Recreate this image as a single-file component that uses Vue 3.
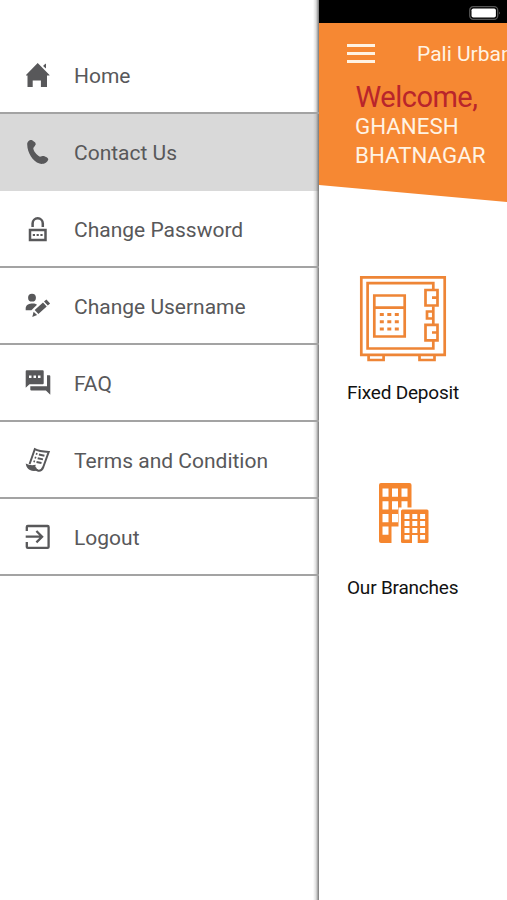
<script setup>
const items = [
  { id: 'home', label: 'Home' },
  { id: 'contact', label: 'Contact Us', active: true },
  { id: 'password', label: 'Change Password' },
  { id: 'username', label: 'Change Username' },
  { id: 'faq', label: 'FAQ' },
  { id: 'terms', label: 'Terms and Condition' },
  { id: 'logout', label: 'Logout' },
]
</script>

<template>
  <div class="screen">
    <nav class="drawer">
      <a v-for="item in items" :key="item.id" class="item" :class="{ active: item.active }">
        <svg class="icon" viewBox="0 0 32 32">
          <g v-if="item.id === 'home'">
            <path d="M15.7 4 4 16v.6h1.500V28h5.200v-6.400h8.200V28H25V16.600h2.500V16Z" />
            <path d="M21.500 6.300 24 4.600v4.800l-2.500-2Z" />
          </g>
          <path v-else-if="item.id === 'contact'" d="M5.2 8.5C5 5.5 7.800 3.500 10.200 4.200L13.200 6.600Q14.600 8.200 12.800 10L11.300 12C11.400 15 14.500 19 18 20.800L20.500 20C22 19.500 26 21.500 26.300 23.200C25.500 27 21 28.600 17.500 27.600C10.500 25 5.500 17 5.200 8.500Z" />
          <g v-else-if="item.id === 'password'">
            <path class="line" d="M10.600 14V10.400a5.100 5.100 0 0 1 10.200 0V14" stroke-width="2.500" />
            <path class="line" d="M8 17h15.500v10H8Z" stroke-width="2.500" />
            <path class="line" d="M10.800 22h10" stroke-width="2.200" stroke-dasharray="2.200 1.600" />
          </g>
          <g v-else-if="item.id === 'username'">
            <circle cx="10" cy="7.700" r="3.900" />
            <path d="M3.700 20.300v-2.600c.5-3 3.500-4.200 7-4.200 1.800 0 3.300.4 4.300 1.200l-5.600 5.600Z" />
            <path d="m12.700 20 8.300-7.600 3.700 4-8.300 7.600ZM22 11.500l2.400-2.100 3.700 4-2.300 2.200ZM11.600 21.700l3.500 3.400-4.800 2Z" />
          </g>
          <g v-else-if="item.id === 'faq'">
            <path fill-rule="evenodd" d="M4.700 3.300h16q1 0 1 1v12q0 1-1 1H7.500l-3.800 3.500V4.300q0-1 1-1ZM7 8.400v2.500h2.500V8.400ZM11.500 8.400v2.500H14V8.400ZM16 8.400v2.500h2.500V8.400Z" />
            <path d="M25 8.300h2.300q1 0 1 1v18.400l-4.400-4.200H9.300q-1 0-1-1v-3.200H25Z" />
          </g>
          <g v-else-if="item.id === 'terms'">
            <path class="line" d="M7.600 20 12.800 5.200q4 2.300 13.900 2.700L21.300 23q-1.800 4.300-5 3.700Q13 26 13.100 23.300" stroke-width="2" />
            <path d="M3.700 19.600q4.700 2.400 10 1.200-1.300 3.800 2.800 5.100-4.500 2-8.600.1-3.500-1.600-4.200-6.400Z" />
            <path class="line" d="m13.900 9.600 1.500.5m1.500.4 5.500 1.200M12.700 13.400l1.500.5m1.500.4 5.300 1.100M11.500 17.100l1.500.5m1.500.4 5 1" stroke-width="1.900" />
          </g>
          <g v-else>
            <path class="line" d="M4.800 10V6q0-1 1-1h19.800q1 0 1 1v19.900q0 1-1 1H5.800q-1 0-1-1V21" stroke-width="2.300" />
            <path class="line" d="M3.700 15.700h15.500M14.400 10l5.700 5.700-5.700 5.700" stroke-width="2.300" />
          </g>
        </svg>
        <span class="label">{{ item.label }}</span>
      </a>
    </nav>

    <main class="page">
      <div class="status">
        <svg class="battery" viewBox="0 0 34 16">
          <rect x="1.700" y="1.700" width="28" height="12.600" rx="3.500" fill="#000" stroke="#555" stroke-width="1.300" />
          <rect x="3.500" y="3.500" width="24.400" height="9" rx="1.800" fill="#fff" />
          <path d="M31 6.500q1.700 1.500 0 3Z" fill="#777" />
        </svg>
      </div>
      <header class="hero">
        <div class="bar">
          <span class="burger"><i></i><i></i><i></i></span>
          <span class="title">Pali Urban</span>
        </div>
        <div class="welcome">Welcome,</div>
        <div class="name">GHANESH<br />BHATNAGAR</div>
      </header>
      <section class="tile">
        <svg class="safe" viewBox="0 0 88 88" fill="none" stroke="#ee8536" stroke-width="2.700">
          <path d="M2.300 2.300h83.400v77.500H2.300Z" />
          <path d="M74.300 15V8.200H8.600v65.300h65.700V66M74.300 31.300V51" />
          <path d="M15.300 20.500h30.400v41H15.300ZM15.300 32.700h30.400" />
          <path d="M20.800 39.500h19M20.800 46.700h19M20.800 54h19" stroke-width="3" stroke-dasharray="4 3.500" />
          <path d="M66.500 15h12v15.500h-12ZM66.500 49.800h12v15.500h-12ZM73 22.700h5.500M73 57.500h5.500M74 36.500h-6v7h6" />
          <path d="M9.600 80v5h15v-5M60.500 80v5h15v-5" />
        </svg>
        <span class="caption">Fixed Deposit</span>
      </section>
      <section class="tile branches">
        <svg class="towers" viewBox="0 0 50 61">
          <rect width="32.500" height="60" rx="2" fill="#f5862f" />
          <path d="M3.500 5.500h6v8.300h-6ZM13 5.500h6v8.300h-6ZM22.500 5.500h6v8.300h-6ZM3.500 18.300h6v8.300h-6ZM13 18.300h6v8.300h-6ZM22.500 18.300h6v8.300h-6ZM3.500 31h6v8.300h-6ZM13 31h6v8.300h-6ZM3.500 43.500h6v8.300h-6ZM12.500 43.500H33V61H12.500ZM19.500 24.500H33V61H19.500Z" fill="#fff" />
          <rect x="22" y="26.500" width="27.500" height="33.500" rx="1.500" fill="#f5862f" />
          <path d="M25.500 31h5v5h-5ZM33.300 31h5v5h-5ZM41.100 31h5v5h-5ZM25.500 38h5v5h-5ZM33.300 38h5v5h-5ZM41.100 38h5v5h-5ZM25.500 45h5v5h-5ZM33.300 45h5v5h-5ZM41.100 45h5v5h-5ZM25.500 52h5v4.500h-5ZM33 52h5.700v8.500H33ZM41.100 52h5v4.500h-5Z" fill="#fff" />
        </svg>
        <span class="caption">Our Branches</span>
      </section>
    </main>
  </div>
</template>

<style>
body {
  margin: 0;
  overflow: hidden;
}
</style>

<style scoped>
.screen {
  display: flex;
  width: 507px;
  height: 900px;
  overflow: hidden;
  background: #fff;
  font-family: Roboto, "Liberation Sans", sans-serif;
}
.drawer {
  box-sizing: border-box;
  flex: none;
  width: 319px;
  padding-top: 37px;
  background: linear-gradient(to right, transparent 313px, #ddd 316px, #777 319px);
}
.item {
  box-sizing: border-box;
  display: flex;
  align-items: center;
  height: 77px;
  padding: 1px 0 0 22px;
  border-bottom: 2px solid #a3a3a3;
  color: #58585a;
}
.item.active {
  border-bottom-color: transparent;
  background: linear-gradient(to right, #d9d9d9 313px, #c4c4c4 316px, #777 319px);
}
.icon {
  width: 32px;
  height: 32px;
  fill: #58585a;
}
.line {
  fill: none;
  stroke: #58585a;
}
.label {
  margin-left: 20px;
  font-size: 21px;
  line-height: 24px;
  padding-top: 1px;
  white-space: nowrap;
}
.page {
  flex: none;
  width: 188px;
  overflow: hidden;
  background: #fff;
}
.status {
  display: flex;
  height: 23px;
  padding: 5px 0 0 149px;
  box-sizing: border-box;
  background: #000;
}
.battery {
  width: 34px;
  height: 16px;
}
.hero {
  box-sizing: border-box;
  height: 179px;
  padding-top: 17px;
  background: #f68833;
  color: #fff3e4;
  clip-path: polygon(0 0, 100% 0, 100% 100%, 0 162px);
}
.bar {
  display: flex;
  align-items: center;
  height: 27px;
  padding-left: 28px;
}
.burger {
  display: flex;
  flex: none;
  flex-direction: column;
  gap: 5px;
  width: 28px;
}
.burger i {
  height: 3px;
  background: #fff3e4;
}
.title {
  margin-left: 42px;
  font-size: 21px;
  white-space: nowrap;
}
.welcome {
  padding: 13px 0 0 36.500px;
  color: #b9252b;
  font-size: 29px;
  line-height: 34px;
  letter-spacing: -0.500px;
}
.name {
  padding-left: 36px;
  margin-top: -2px;
  font-size: 22.300px;
  line-height: 29px;
}
.tile {
  display: flex;
  flex-direction: column;
  align-items: flex-start;
  padding: 73px 0 0 28px;
}
.safe {
  width: 88px;
  height: 88px;
  margin-left: 12px;
}
.caption {
  margin-top: 18px;
  color: #111;
  font-size: 19px;
  line-height: 23px;
  letter-spacing: -0.200px;
  white-space: nowrap;
}
.branches {
  padding-top: 79px;
}
.towers {
  width: 50px;
  height: 61px;
  margin-left: 32px;
}
.branches .caption {
  margin-top: 32px;
}
</style>
